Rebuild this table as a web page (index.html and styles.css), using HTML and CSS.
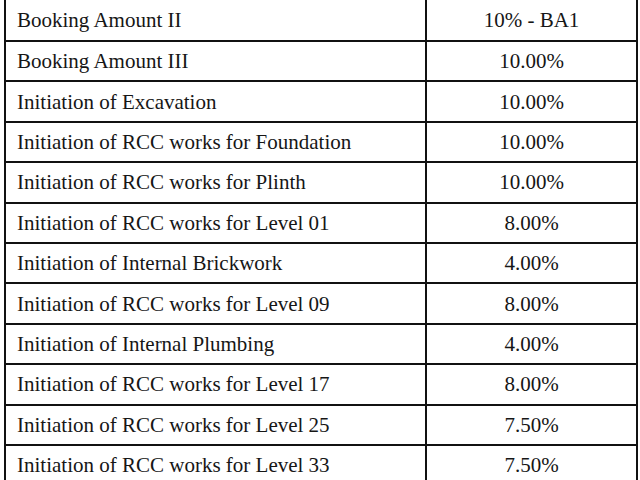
FILE: index.html
```html
<!DOCTYPE html>
<html lang="en">
<head>
<meta charset="utf-8">
<title>Payment Schedule</title>
<link rel="stylesheet" href="styles.css">
</head>
<body>
<div class="sheet">
  <div class="row first"><div class="stage">Booking Amount II</div><div class="value">10% - BA1</div></div>
  <div class="row"><div class="stage">Booking Amount III</div><div class="value">10.00%</div></div>
  <div class="row"><div class="stage">Initiation of Excavation</div><div class="value">10.00%</div></div>
  <div class="row"><div class="stage">Initiation of RCC works for Foundation</div><div class="value">10.00%</div></div>
  <div class="row"><div class="stage">Initiation of RCC works for Plinth</div><div class="value">10.00%</div></div>
  <div class="row"><div class="stage">Initiation of RCC works for Level 01</div><div class="value">8.00%</div></div>
  <div class="row"><div class="stage">Initiation of Internal Brickwork</div><div class="value">4.00%</div></div>
  <div class="row"><div class="stage">Initiation of RCC works for Level 09</div><div class="value">8.00%</div></div>
  <div class="row"><div class="stage">Initiation of Internal Plumbing</div><div class="value">4.00%</div></div>
  <div class="row"><div class="stage">Initiation of RCC works for Level 17</div><div class="value">8.00%</div></div>
  <div class="row"><div class="stage">Initiation of RCC works for Level 25</div><div class="value">7.50%</div></div>
  <div class="row"><div class="stage">Initiation of RCC works for Level 33</div><div class="value">7.50%</div></div>
</div>
</body>
</html>
```
FILE: styles.css
```css
html, body {
  margin: 0;
  padding: 0;
  background: #ffffff;
}
body {
  width: 640px;
  height: 480px;
  overflow: hidden;
  font-family: "Liberation Serif", "DejaVu Serif", serif;
  font-size: 21px;
  color: #161616;
}
.sheet {
  margin-left: 4px;
  width: 634px;
  box-sizing: border-box;
  border-left: 2px solid #111;
  border-right: 2px solid #111;
}
.row {
  display: grid;
  grid-template-columns: 421px 1fr;
  height: 40.4px;
  box-sizing: border-box;
  border-bottom: 2px solid #111;
}
.row.first {
  height: 42px;
}
.stage, .value {
  display: flex;
  align-items: center;
  line-height: 1;
  padding-top: 1px;
}
.stage {
  padding-left: 11px;
  border-right: 2px solid #111;
}
.value {
  justify-content: center;
}
```
